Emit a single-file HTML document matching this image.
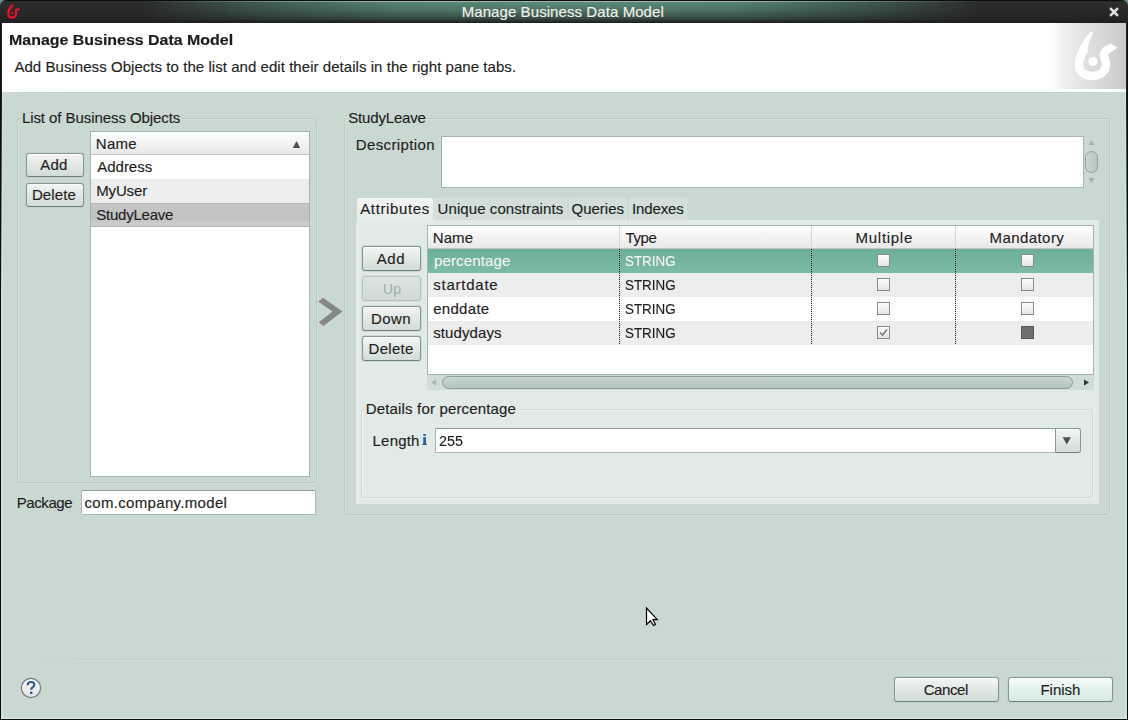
<!DOCTYPE html>
<html><head><meta charset="utf-8">
<style>
*{box-sizing:border-box;margin:0;padding:0}
html,body{width:1128px;height:720px;overflow:hidden;background:#6f8e97}
body{position:relative;font-family:"Liberation Sans",sans-serif;font-size:15px;color:#1e1e1e}
.a{position:absolute}
.t{position:absolute;white-space:nowrap;line-height:17px;-webkit-text-stroke:0.15px currentColor}
#title{left:0;top:0;width:1128px;height:23px;border-radius:6px 6px 0 0;
 background:linear-gradient(#0c0c0c 0 1px,rgba(0,0,0,0) 1px,rgba(0,0,0,0) 12%,rgba(30,30,30,.2) 45%,rgba(30,30,30,.55) 78%,rgba(30,30,30,.85) 92%,#1e1e1e 100%),
 linear-gradient(90deg,#2c2c2c 0,#2c2c2c 140px,#3f5c52 260px,#568472 400px,#5a8a78 563px,#568472 730px,#3f5c52 860px,#2c2c2c 980px,#2c2c2c 100%);}
#title .hl{left:8px;top:1px;width:1112px;height:1px;background:linear-gradient(90deg,rgba(160,181,173,0) 12%,rgba(160,181,173,1) 35%,rgba(160,181,173,1) 65%,rgba(160,181,173,0) 88%)}
.btn{position:absolute;border:1px solid #86988f;border-bottom-color:#6f8279;border-radius:3px;background:linear-gradient(#f3f5f4,#e3e9e6 45%,#d2dcd8);box-shadow:inset 0 1px 0 #fff,0 0 0 1px rgba(190,205,199,.6)}
.grp{position:absolute;border:1px solid #b9cac4;border-radius:3px;box-shadow:inset 1px 1px 0 #d4e0db,1px 1px 0 #d4e0db}
.white{position:absolute;background:#fff;border:1px solid #a4b5ae}
.dot{position:absolute;width:1px;background:repeating-linear-gradient(#111 0 1px,transparent 1px 2px)}
.cb{position:absolute;width:13px;height:13px;border:1px solid #8a8a8a;background:linear-gradient(#fdfdfd,#e4e4e4)}
.row{position:absolute;left:428px;width:665px;height:24px}
.tab{position:absolute;top:198px;height:22px;background:#d2ded9;border:1px solid #d8e3de;border-bottom:none;border-radius:3px 3px 0 0}
</style></head><body>
<!-- title bar -->
<div id="title" class="a"><div class="a hl"></div></div>
<svg class="a" style="left:0;top:0" width="30" height="23" viewBox="0 0 30 23">
 <path d="M12.3,5.2 C10,7.5 8.2,10.5 8.3,13.6 C8.4,16.6 10.3,17.9 12.4,17.7 C14.8,17.5 16.1,15.6 16,13.3 C15.9,11.8 15.3,11.2 16.2,10.1 C16.8,9.5 17.6,9.4 18.6,9.5" fill="none" stroke="#e8102b" stroke-width="2.3" stroke-linecap="round"/>
 <path d="M12.6,4.6 C10.5,6.6 8.6,9.5 7.6,12.5 L9.3,12.8 C10.3,10 11.5,7.6 12.9,5.4 Z" fill="#e8102b"/>
 <circle cx="12.3" cy="13.2" r="1.15" fill="#e8102b"/>
</svg>
<div class="t" style="left:461.7px;top:3px;color:#f3f1ea;letter-spacing:0.08px">Manage Business Data Model</div>
<svg class="a" style="left:1108px;top:6px" width="12" height="12" viewBox="0 0 12 12"><path d="M3,3 L9,9 M9,3 L3,9" stroke="#dedede" stroke-width="2.5" stroke-linecap="square"/></svg>

<!-- client -->
<div class="a" style="left:0;top:23px;width:1128px;height:697px;background:#cad8d2"></div>
<div class="a" style="left:0;top:23px;width:1px;height:697px;background:#0e0e0e"></div>
<div class="a" style="left:1127px;top:23px;width:1px;height:697px;background:#0e0e0e"></div>
<div class="a" style="left:1px;top:23px;width:1px;height:697px;background:linear-gradient(#232323 0,#232323 80px,rgba(35,35,35,.6) 160px,rgba(35,35,35,0) 270px)"></div>
<div class="a" style="left:1126px;top:23px;width:1px;height:697px;background:linear-gradient(#232323 0,#232323 80px,rgba(35,35,35,.6) 160px,rgba(35,35,35,0) 270px)"></div>
<div class="a" style="left:2px;top:92px;width:1px;height:627px;background:linear-gradient(rgba(216,228,223,.5),#d6e3de 200px)"></div>
<div class="a" style="left:1125px;top:92px;width:1px;height:627px;background:linear-gradient(rgba(216,228,223,.5),#d6e3de 200px)"></div>
<div class="a" style="left:0;top:719px;width:1128px;height:1px;background:#111"></div>
<div class="a" style="left:2px;top:718px;width:1124px;height:1px;background:#dbe6e2"></div>

<!-- header -->
<div class="a" style="left:2px;top:23px;width:1124px;height:69px;background:#fff"></div>
<div class="a" style="left:2px;top:92px;width:1124px;height:2px;background:linear-gradient(#b9cbc5 0 1px,#d6e2dd 1px 2px);-webkit-mask-image:linear-gradient(90deg,transparent 16px,#000 90px,#000 1030px,transparent 1106px)"></div>
<div class="a" style="left:1px;top:23px;width:1px;height:69px;background:#232323"></div><div class="a" style="left:1126px;top:23px;width:1px;height:69px;background:#232323"></div>
<div class="t" style="left:9px;top:32px;font-weight:bold;font-size:14px;transform:scaleX(1.1385);transform-origin:0 0;color:#1c1c1c">Manage Business Data Model</div>
<div class="t" style="left:14.4px;top:58px;letter-spacing:0.05px">Add Business Objects to the list and edit their details in the right pane tabs.</div>
<div class="a" style="left:1050px;top:23px;width:76px;height:66px;background:linear-gradient(90deg,#fff 0%,#f2f3f3 15%,#e6e8e8 35%,#dcdddd 55%,#d2d3d3 80%,#c8c9c9 100%)"></div>
<svg class="a" style="left:1050px;top:23px" width="76" height="66" viewBox="0 0 76 66">
 <path d="M33,28 C30,34 29,38 29,42 C29,49 35,53 42.5,53 C50.5,53 56,48 56,41 C56,37 53,34 54,30.5 C55,27.5 58,25.5 61,25.5" fill="none" stroke="#fff" stroke-width="8.5" stroke-linecap="butt" stroke-linejoin="round"/>
 <path d="M41,8.8 C42.3,8.2 43.6,9.2 42.8,10.6 C40,15.5 38,21 37.2,31.5 L28.3,28 C31.5,20 35.5,14 41,8.8 Z" fill="#fff"/>
 <path d="M60,20 L67.5,24.8 L60,29.8 Z" fill="#fff"/>
 <circle cx="43" cy="38.5" r="4.6" fill="#fff"/>
</svg>

<!-- LEFT GROUP -->
<div class="grp" style="left:17px;top:118px;width:300px;height:365px"></div>
<div class="a" style="left:22px;top:112px;width:159px;height:12px;background:#cad8d2"></div>
<div class="t" style="left:21.9px;top:109px;letter-spacing:-0.07px">List of Business Objects</div>
<div class="btn" style="left:26px;top:153px;width:58px;height:24px"></div>
<div class="t" style="left:40.2px;top:156px;letter-spacing:0.2px">Add</div>
<div class="btn" style="left:26px;top:183px;width:58px;height:24px"></div>
<div class="t" style="left:31.9px;top:186px;letter-spacing:0.12px">Delete</div>

<div class="white" style="left:90px;top:131px;width:220px;height:346px"></div>
<div class="a" style="left:91px;top:132px;width:218px;height:23px;background:linear-gradient(#fefefe,#f3f3f3 50%,#e8e8e8);border-bottom:1px solid #c3c3c3"></div>
<div class="t" style="left:95.8px;top:135px;letter-spacing:0.3px">Name</div>
<svg class="a" style="left:292px;top:140px" width="9" height="9" viewBox="0 0 9 9"><path d="M4.5,1 L8.2,8 L0.8,8 Z" fill="#4f4f4f"/></svg>
<div class="a" style="left:91px;top:179px;width:218px;height:24px;background:#ededed"></div>
<div class="a" style="left:91px;top:203px;width:218px;height:24px;background:linear-gradient(#b6b6b6 0 1px,#c6c6c6 1px,#c1c1c1 70%,#cccccc 88%,#cccccc);border-bottom:1px solid #b2b2b2"></div>
<div class="t" style="left:97.2px;top:158px">Address</div>
<div class="t" style="left:96.2px;top:182px;letter-spacing:-0.14px">MyUser</div>
<div class="t" style="left:96.2px;top:206px;letter-spacing:-0.22px">StudyLeave</div>

<div class="t" style="left:16.8px;top:494px;letter-spacing:-0.43px">Package</div>
<div class="white" style="left:81px;top:490px;width:235px;height:25px;border-radius:2px;border-color:#a9bab3;border-top-color:#8b9f97"></div>
<div class="t" style="left:84.5px;top:494px;letter-spacing:0.32px">com.company.model</div>

<!-- arrow -->
<svg class="a" style="left:310px;top:290px" width="40" height="45" viewBox="0 0 40 45"><path d="M8.1,11.6 L13.1,7.8 L32.5,21.6 L13.4,35.9 L8.75,32.2 L22.5,21.6 Z" fill="#878787"/></svg>

<!-- RIGHT GROUP -->
<div class="grp" style="left:344px;top:118px;width:766px;height:397px"></div>
<div class="a" style="left:347px;top:112px;width:80px;height:12px;background:#cad8d2"></div>
<div class="t" style="left:348.3px;top:109px;letter-spacing:-0.18px">StudyLeave</div>
<div class="t" style="left:355.8px;top:136px;letter-spacing:0.37px">Description</div>
<div class="white" style="left:441px;top:136px;width:643px;height:52px"></div>
<!-- v scrollbar -->
<svg class="a" style="left:1084px;top:136px" width="16" height="52" viewBox="0 0 16 52">
 <defs><linearGradient id="vg" x1="0" y1="0" x2="1" y2="0"><stop offset="0" stop-color="#c8d6d1"/><stop offset="1" stop-color="#b5c5bf"/></linearGradient></defs>
 <path d="M7.5,4 L10.5,9 L4.5,9 Z" fill="#a2b2ac"/>
 <rect x="1.5" y="15.5" width="12" height="21" rx="6" fill="url(#vg)" stroke="#8fa39b"/>
 <path d="M4.5,42 L10.5,42 L7.5,47 Z" fill="#a2b2ac"/>
</svg>

<!-- tabs -->
<div class="tab" style="left:434px;width:133px"></div>
<div class="tab" style="left:569px;width:58px"></div>
<div class="tab" style="left:629px;width:58px"></div>
<div class="a" style="left:356px;top:220px;width:743px;height:284px;background:#e1eae6"></div>
<div class="a" style="left:357px;top:198px;width:76px;height:23px;background:linear-gradient(#f4f6f5,#e4ebe8);border-radius:3px 3px 0 0"></div>
<div class="t" style="left:360.2px;top:200px;letter-spacing:0.64px">Attributes</div>
<div class="t" style="left:437.6px;top:200px;letter-spacing:0.08px">Unique constraints</div>
<div class="t" style="left:571.5px;top:200px">Queries</div>
<div class="t" style="left:631.9px;top:200px;letter-spacing:-0.1px">Indexes</div>

<div class="btn" style="left:362px;top:246px;width:59px;height:25px"></div>
<div class="t" style="left:376.7px;top:250px;letter-spacing:0.65px">Add</div>
<div class="btn" style="left:362px;top:276px;width:59px;height:25px;background:linear-gradient(#dae4e0,#d0dbd6);border-color:#b5c4be;box-shadow:0 0 0 1px rgba(200,213,207,.6)"></div>
<div class="t" style="left:382.5px;top:280px;transform:scaleX(0.94);transform-origin:0 0;color:#a3b0ab">Up</div>
<div class="btn" style="left:362px;top:306px;width:59px;height:25px"></div>
<div class="t" style="left:371.1px;top:310px;letter-spacing:0.4px">Down</div>
<div class="btn" style="left:362px;top:336px;width:59px;height:25px"></div>
<div class="t" style="left:368.5px;top:340px;letter-spacing:0.3px">Delete</div>

<!-- attributes table -->
<div class="white" style="left:427px;top:225px;width:667px;height:150px"></div>
<div class="a" style="left:428px;top:226px;width:665px;height:23px;background:linear-gradient(#fefefe,#f4f4f4 50%,#e8e8e8);border-bottom:1px solid #c3c3c3"></div>
<div class="a" style="left:619px;top:226px;width:1px;height:22px;background:#d6d6d6"></div>
<div class="a" style="left:811px;top:226px;width:1px;height:22px;background:#d6d6d6"></div>
<div class="a" style="left:955px;top:226px;width:1px;height:22px;background:#d6d6d6"></div>
<div class="t" style="left:432.7px;top:229px;letter-spacing:0.13px">Name</div>
<div class="t" style="left:625.5px;top:229px;letter-spacing:-0.4px">Type</div>
<div class="t" style="left:855.6px;top:229px;letter-spacing:0.71px">Multiple</div>
<div class="t" style="left:989.5px;top:229px;letter-spacing:0.43px">Mandatory</div>

<div class="row" style="top:249px;background:linear-gradient(#6daf98,#7cbba6)"></div>
<div class="row" style="top:273px;background:#ededed"></div>
<div class="row" style="top:321px;background:#ededed"></div>
<div class="dot" style="left:619px;top:249px;height:96px"></div>
<div class="dot" style="left:811px;top:249px;height:96px"></div>
<div class="dot" style="left:955px;top:249px;height:96px"></div>

<div class="t" style="left:433.9px;top:252px;color:#f4f4f4;letter-spacing:0.16px">percentage</div>
<div class="t" style="left:625.3px;top:252px;color:#f4f4f4;transform:scaleX(0.893);transform-origin:0 0">STRING</div>
<div class="t" style="left:433.2px;top:276px;letter-spacing:0.77px">startdate</div>
<div class="t" style="left:625.3px;top:276px;transform:scaleX(0.893);transform-origin:0 0">STRING</div>
<div class="t" style="left:433.2px;top:300px;letter-spacing:0.3px">enddate</div>
<div class="t" style="left:625.3px;top:300px;transform:scaleX(0.893);transform-origin:0 0">STRING</div>
<div class="t" style="left:433.2px;top:324px;letter-spacing:0.1px">studydays</div>
<div class="t" style="left:625.3px;top:324px;transform:scaleX(0.893);transform-origin:0 0">STRING</div>

<div class="cb" style="left:877px;top:254px"></div>
<div class="cb" style="left:1021px;top:254px"></div>
<div class="cb" style="left:877px;top:278px"></div>
<div class="cb" style="left:1021px;top:278px"></div>
<div class="cb" style="left:877px;top:302px"></div>
<div class="cb" style="left:1021px;top:302px"></div>
<div class="cb" style="left:877px;top:326px"></div>
<svg class="a" style="left:877px;top:326px" width="13" height="13" viewBox="0 0 13 13"><path d="M3,6.5 L5.5,9 L10,3.5" fill="none" stroke="#7a7a7a" stroke-width="1.6"/></svg>
<div class="cb" style="left:1021px;top:326px;background:#6f6f6f;border-color:#555"></div>

<!-- h scrollbar -->
<div class="a" style="left:427px;top:375px;width:667px;height:15px;background:#d0dcd7"></div>
<svg class="a" style="left:427px;top:375px" width="667" height="15" viewBox="0 0 667 15">
 <defs><linearGradient id="hg2" x1="0" y1="0" x2="0" y2="1"><stop offset="0" stop-color="#c9d7d2"/><stop offset="1" stop-color="#b3c3bd"/></linearGradient></defs>
 <path d="M4,7.5 L9,4.5 L9,10.5 Z" fill="#a9b8b2"/>
 <rect x="15.5" y="1.5" width="630" height="12" rx="6" fill="url(#hg2)" stroke="#8aa097"/>
 <path d="M657,4.5 L662,7.5 L657,10.5 Z" fill="#333"/>
</svg>

<!-- details group -->
<div class="grp" style="left:361px;top:409px;width:732px;height:89px;border-color:#cad8d2;box-shadow:inset 1px 1px 0 #eef3f1,1px 1px 0 #eef3f1"></div>
<div class="a" style="left:364px;top:403px;width:155px;height:10px;background:#e1eae6"></div>
<div class="t" style="left:365.8px;top:400px;letter-spacing:0.16px">Details for percentage</div>
<div class="t" style="left:372.6px;top:432px;letter-spacing:0.18px">Length</div>
<svg class="a" style="left:416px;top:430px" width="20" height="20" viewBox="0 0 20 20"><defs><linearGradient id="ig" x1="0" y1="0" x2="0" y2="1"><stop offset="0" stop-color="#2462ba"/><stop offset=".6" stop-color="#2457a8"/><stop offset="1" stop-color="#3f5d80"/></linearGradient></defs><rect x="7.2" y="4" width="2.8" height="2" rx=".7" fill="#2766c0"/><path d="M6.9,7.6 L10,7 L10,13.8 L10.9,13.8 L10.9,15 L6.5,15 L6.5,13.8 L7.3,13.8 L7.3,8.6 L6.9,8.6 Z" fill="url(#ig)"/></svg>
<div class="white" style="left:435px;top:428px;width:621px;height:25px;border-color:#a9bab3;border-top-color:#8b9f97;border-right:none"></div>
<div class="t" style="left:438.8px;top:432px;transform:scaleX(0.954);transform-origin:0 0">255</div>
<div class="btn" style="left:1055px;top:428px;width:26px;height:25px;border-radius:0 3px 3px 0;box-shadow:inset 0 1px 0 #fff"></div>
<svg class="a" style="left:1062px;top:436px" width="12" height="10" viewBox="0 0 12 10"><path d="M0.7,1.2 L8.9,1.2 L4.8,8.6 Z" fill="#4f4f4f"/></svg>

<!-- bottom -->
<div class="a" style="left:2px;top:659px;width:1124px;height:2px;background:linear-gradient(#b9cbc5 0 1px,#d6e2dd 1px 2px);-webkit-mask-image:linear-gradient(90deg,transparent 40px,#000 130px,#000 1030px,transparent 1106px)"></div>
<svg class="a" style="left:20px;top:677px" width="22" height="22" viewBox="0 0 22 22">
 <defs><linearGradient id="hg" x1="0" y1="0" x2="0" y2="1"><stop offset="0" stop-color="#fbfbfb"/><stop offset="1" stop-color="#e3e3e3"/></linearGradient></defs>
 <circle cx="11" cy="11" r="9.6" fill="url(#hg)" stroke="#6b7f86" stroke-width="1.2"/>
 <path d="M7.7,8.3 C7.7,6 9.2,5 11,5 C13,5 14.4,6.2 14.4,7.8 C14.4,9.5 13,10 12,10.8 C11.4,11.3 11.2,11.8 11.2,12.8" fill="none" stroke="#2f5e8e" stroke-width="2.2"/>
 <rect x="10" y="14.6" width="2.4" height="2.4" fill="#2f5e8e"/>
</svg>
<div class="btn" style="left:894px;top:677px;width:105px;height:25px"></div>
<div class="t" style="left:923.7px;top:681px;letter-spacing:-0.42px">Cancel</div>
<div class="btn" style="left:1008px;top:677px;width:105px;height:25px;background:linear-gradient(#fbfcfc,#e5f2ef 45%,#d3e9e4)"></div>
<div class="t" style="left:1040.4px;top:681px">Finish</div>

<!-- cursor -->
<svg class="a" style="left:640px;top:602px" width="24" height="28" viewBox="0 0 24 28">
 <path d="M6.5,6 L6.5,22.5 L10.5,18.7 L13.5,23.5 L15.5,22.5 L13,17.6 L17.3,17.6 Z" fill="#fff" stroke="#000" stroke-width="1.2" stroke-linejoin="miter"/>
</svg>
</body></html>
